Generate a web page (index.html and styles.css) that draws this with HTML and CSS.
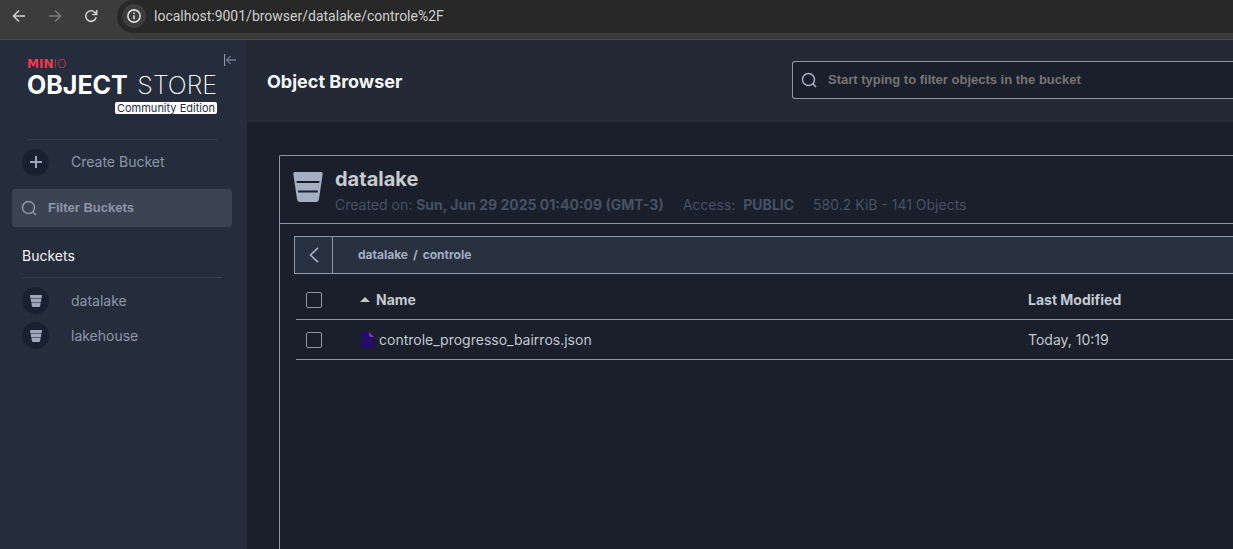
FILE: index.html
```
<!DOCTYPE html>
<html lang="en">
<head>
<meta charset="utf-8">
<title>Object Browser</title>
<link rel="stylesheet" href="styles.css">
</head>
<body>
<svg class="defs" aria-hidden="true">
  <symbol id="bucket" viewBox="0 0 30 30"><path fill="currentColor" d="M2 0h26q2 0 1.700 2L26 27q-.5 3-3 3H7q-2.500 0-3-3L.3 2Q0 0 2 0zM3.500 9l.4 2h22.200l.4-2zM5 18.500l.4 2h19.200l.4-2z"/></symbol>
  <symbol id="bucket-small" viewBox="0 0 12 12"><path fill="currentColor" d="M0 0h12l-.4 3H.4zM.8 4h10.400l-.4 3H1.200z"/><path fill="currentColor" d="M1.400 8h9.200l-.5 3q-.1 1-1.100 1H3q-1 0-1.100-1z"/><path fill="currentColor" opacity=".5" d="M.4 3h11.200l-1 5H1.400z"/></symbol>
  <symbol id="search" viewBox="0 0 16 16"><g fill="none" stroke="currentColor" stroke-width="1.500"><circle cx="7.500" cy="7.500" r="6"/><path d="m11.500 11.500 3.500 3.500"/></g></symbol>
</svg>
<div class="toolbar">
  <button class="nav" aria-label="Back"><svg width="16" height="16" viewBox="0 0 16 16"><path d="M14 8H2.500M8 2.500 2.500 8 8 13.500"/></svg></button>
  <button class="nav disabled" aria-label="Forward" disabled><svg width="16" height="16" viewBox="0 0 16 16"><path d="M2 8h11.500M8 2.500 13.500 8 8 13.500"/></svg></button>
  <button class="nav" aria-label="Reload"><svg width="16" height="16" viewBox="0 0 16 16"><path d="M13.200 9.300A5.300 5.300 0 1 1 12 4.500l1.500 1.800M13.700 2v4.500H9.200"/></svg></button>
  <div class="omnibox">
    <button class="info" aria-label="Site information"><svg width="14" height="14" viewBox="0 0 14 14"><circle cx="7" cy="7" r="6.100"/><path d="M7 6.300v4M7 3.500v1.500"/></svg></button>
    <input class="url" aria-label="Address" value="localhost:9001/browser/datalake/controle%2F">
  </div>
</div>
<div class="app">
  <aside class="sidebar">
    <div class="brand">
      <button class="collapse" aria-label="Collapse menu"><svg width="12" height="12" viewBox="0 0 12 12"><path d="M.6 0v12M12 6H2.700M6.500 2 2.700 6l3.800 4"/></svg></button>
      <div class="vendor"><b>MIN</b>IO</div>
      <div class="product"><b>OBJECT</b><span>STORE</span></div>
      <div class="edition">Community Edition</div>
    </div>
    <button class="item create"><span class="dot"><svg width="12" height="12" viewBox="0 0 12 12"><path d="M6 0v12M0 6h12" stroke="currentColor" stroke-width="2"/></svg></span>Create Bucket</button>
    <label class="field filter"><svg width="16" height="16"><use href="#search"/></svg><input aria-label="Filter Buckets" placeholder="Filter Buckets"></label>
    <h2 class="side-title">Buckets</h2>
    <nav class="buckets">
      <a class="item" href="#datalake"><span class="dot"><svg width="12" height="12"><use href="#bucket-small"/></svg></span>datalake</a>
      <a class="item" href="#lakehouse"><span class="dot"><svg width="12" height="12"><use href="#bucket-small"/></svg></span>lakehouse</a>
    </nav>
  </aside>
  <main class="main">
    <header class="page-head">
      <h1>Object Browser</h1>
      <label class="field search"><svg width="16" height="16"><use href="#search"/></svg><input aria-label="Filter objects" placeholder="Start typing to filter objects in the bucket"></label>
    </header>
    <div class="panel">
      <section class="summary">
        <svg width="30" height="30"><use href="#bucket"/></svg>
        <div>
          <h2>datalake</h2>
          <p class="meta"><span>Created on: <b>Sun, Jun 29 2025 01:40:09 (GMT-3)</b></span><span class="access">Access: <b>PUBLIC</b></span><span>580.2 KiB - 141 Objects</span></p>
        </div>
      </section>
      <section class="objects">
        <div class="crumbs">
          <button class="up" aria-label="Up one level"><svg width="10" height="16" viewBox="0 0 10 16"><path d="M9 .8 1.500 8 9 15.200"/></svg></button>
          <nav class="path"><a href="#datalake">datalake</a><span>/</span><a href="#controle">controle</a></nav>
        </div>
        <table>
          <thead><tr><th class="pick"><input type="checkbox" aria-label="Select all"></th><th><span class="cell"><i class="sort"></i>Name</span></th><th class="date">Last Modified</th></tr></thead>
          <tbody><tr><td class="pick"><input type="checkbox" aria-label="Select controle_progresso_bairros.json"></td><td><span class="cell file"><svg width="14" height="16" viewBox="0 0 14 16"><path fill="#260b69" d="M2 0h7l5 5v10q0 1-1 1H2q-1 0-1-1V1q0-1 1-1z"/><path fill="#6a45b0" d="M9 0l5 5h-3q-2 0-2-2z"/></svg>controle_progresso_bairros.json</span></td><td class="date">Today, 10:19</td></tr></tbody>
        </table>
      </section>
    </div>
  </main>
</div>
</body>
</html>
```
FILE: styles.css
```
* { box-sizing: border-box; }
body { margin: 0; min-height: 100vh; display: flex; flex-direction: column; background: #191f2b; color: #c4c9d0; font: 14px/20px Inter, "Liberation Sans", sans-serif; }
button, input { font: inherit; color: inherit; border: 0; padding: 0; background: none; }
button { display: flex; align-items: center; justify-content: center; }
a { color: inherit; text-decoration: none; }
h1, h2, p { margin: 0; }
svg { flex: none; display: block; }
.defs { position: absolute; width: 0; height: 0; }

.toolbar { display: flex; height: 40px; padding-left: 11px; background: #3c3c3c; border-bottom: 1px solid #4a4a48; }
.nav { width: 16px; height: 32px; margin-right: 20px; color: #d0d0d0; }
.nav.disabled { color: #7b7b7b; }
.nav svg, .info svg, .collapse svg, .up svg { fill: none; stroke: currentColor; stroke-width: 1.600; }
.omnibox { flex: 1; display: flex; align-items: center; height: 33px; margin-left: -2px; padding: 0 0 1px 5px; gap: 8px; background: #282828; border-radius: 17px 0 0 17px; }
.info { width: 24px; height: 24px; border-radius: 50%; background: #3d3d3d; color: #dedede; }
.url { flex: 1; color: #cfcfcf; font: 14px/20px Roboto, "Open Sans", sans-serif; }

.app { flex: 1; display: flex; }
.sidebar { flex: none; width: 247px; background: #252d3d; color: #8e96a8; }
.brand { position: relative; height: 100px; margin: 0 30px 0 27px; padding-top: 18px; border-bottom: 1px solid #343e4e; color: #fff; }
.collapse { position: absolute; top: 14px; right: -19px; width: 12px; height: 12px; color: #9aa3b3; }
.collapse svg { stroke-width: 1; }
.vendor { font: 200 12px/12px "DejaVu Sans", sans-serif; color: #f4364f; }
.vendor b { font-weight: 700; }
.product { display: flex; justify-content: space-between; font-weight: 200; font-size: 25px; line-height: 30px; }
.product b { font-weight: 700; }
.edition { width: max-content; margin: 2px 0 0 auto; padding: 0 2px; border-radius: 2px; background: #fff; color: #252d3d; font-size: 11px; line-height: 12px; }
.item { display: flex; align-items: center; justify-content: flex-start; gap: 22px; height: 35px; padding-left: 22px; }
.create { height: 44px; }
.dot { display: grid; place-items: center; width: 27px; height: 27px; border-radius: 50%; background: #192130; color: #a0a7b8; }
.field { display: flex; align-items: center; gap: 11px; height: 38px; padding-left: 8px; border: 1px solid #3c4454; border-radius: 3px; font: 700 13px/20px "Liberation Sans", sans-serif; }
.field input { flex: 1; min-width: 0; }
.filter { margin: 5px 15px 0 12px; background: #3c4352; color: #8e96a8; }
.filter input::placeholder { color: #8e96a8; }
.side-title { margin: 0 25px 0 22px; padding: 19px 0 11px; border-bottom: 1px solid #343e4e; color: #f4f5f7; font-size: 14px; font-weight: 400; }
.buckets { padding-top: 5px; }

.main { flex: 1; min-width: 0; display: flex; flex-direction: column; }
.page-head { display: flex; align-items: center; justify-content: space-between; height: 82px; padding: 0 0 2px 20px; background: #232935; }
h1 { padding-top: 4px; color: #f4f8f8; font-size: 18px; line-height: 24px; font-weight: 700; }
.search { width: 441px; background: #191f2b; border-color: #8e96a8; border-right: 0; border-radius: 3px 0 0 3px; color: #a9b1c2; }
.search input::placeholder { color: #757575; }
.panel { flex: 1; display: flex; flex-direction: column; margin: 33px 0 0 32px; border: 1px solid #8e96a8; border-width: 1px 0 0 1px; border-radius: 2px 0 0 0; }
.summary { display: flex; gap: 12px; padding: 11px 0 8px 13px; }
.summary > svg { margin-top: 5px; color: #a5afc2; }
.summary h2 { font-size: 20px; line-height: 24px; font-weight: 700; color: #c9cccf; }
.meta { display: flex; gap: 19px; padding-top: 4px; color: #465163; }
.access { display: flex; gap: 8px; }
.objects { flex: 1; padding: 12px 0 0 14px; border-top: 1px solid #8e96a8; }
.crumbs { display: flex; height: 38px; border: 1px solid #8e96a8; border-right: 0; background: #283140; color: #a5afc2; }
.up { width: 38px; border-right: 1px solid #8e96a8; }
.path { display: flex; align-items: center; gap: 5px; padding-left: 25px; font-size: 12px; font-weight: 700; }
table { width: calc(100% - 2px); margin: 6px 0 0 2px; border-collapse: separate; border-spacing: 0; table-layout: fixed; }
th, td { height: 40px; padding: 0; border-bottom: 1px solid #8e96a8; text-align: left; vertical-align: middle; }
th { font-weight: 700; }
.pick { width: 64px; padding-left: 10px; }
.date { width: 205px; }
input[type="checkbox"] { appearance: none; display: block; width: 16px; height: 16px; margin: 0; border: 1px solid #8e96a8; border-radius: 2px; }
.cell { display: flex; align-items: center; gap: 6px; }
.file { gap: 5px; }
.sort { width: 10px; height: 5px; background: #c4c9d0; clip-path: polygon(50% 0, 100% 100%, 0 100%); }
```
